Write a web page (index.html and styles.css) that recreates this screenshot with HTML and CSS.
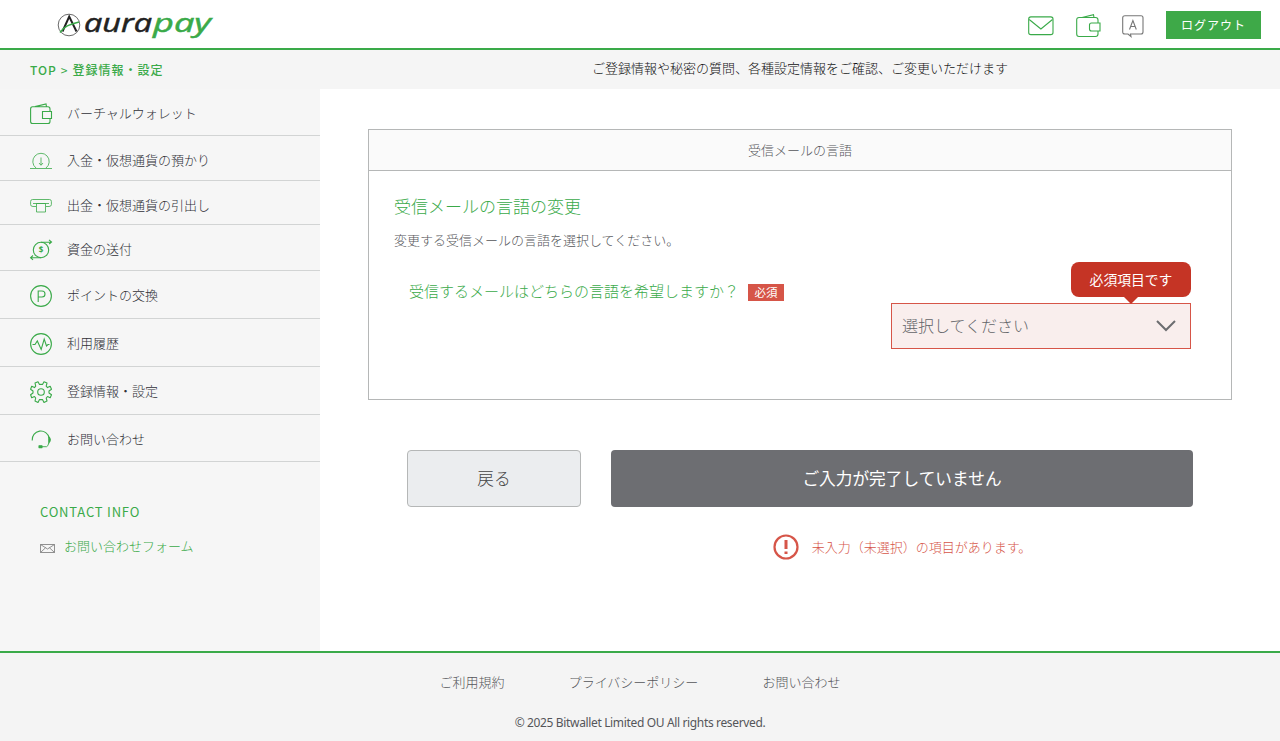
FILE: index.html
```
<!DOCTYPE html>
<html lang="ja">
<head>
<meta charset="utf-8">
<title>aurapay</title>
<link rel="stylesheet" href="styles.css">
</head>
<body>
<header class="header">
  <svg class="logo" width="160" height="42" viewBox="0 0 160 42">
    <circle cx="12" cy="21" r="10.800" fill="none" stroke="#444" stroke-width=".8"/>
    <path d="M5.500 27.500 12.200 12.500 19.500 27.500" fill="none" stroke="#222" stroke-width="2"/>
    <path d="M3 28.500C7 22 13 20.500 22 18" fill="none" stroke="#3aaa49" stroke-width="1.500"/>
    <text class="wordmark" x="27" y="28" textLength="68" lengthAdjust="spacingAndGlyphs" fill="#222" stroke="#222">aura</text>
    <text class="wordmark" x="96" y="28" textLength="58" lengthAdjust="spacingAndGlyphs" fill="#3aaa49" stroke="#3aaa49">pay</text>
  </svg>
  <div class="tools">
    <svg class="tool" width="26" height="20" viewBox="0 0 26 20"><rect x=".7" y=".9" width="24.300" height="17.700" rx="2.200"/><path d="M1.200 3.500 12.900 13 24.500 3.500"/></svg>
    <svg class="tool" width="25" height="24" viewBox="0 0 25 24"><path d="M22 9V6Q22 3.500 19.500 3.500H3Q.7 3.500.7 6V20Q.7 22.500 3 22.500H19.500Q22 22.500 22 20V17M6 3.500 17.500.7 18 3.500"/><path d="M24 9H15.500Q13.500 9 13.500 11V15Q13.500 17 15.500 17H24Z"/></svg>
    <svg class="tool gray" width="22" height="23" viewBox="0 0 22 23"><path d="M3 .7H19Q21 .7 21 2.700V17Q21 19 19 19H8.500L9 21.500 6 19H3Q.7 19 .7 17V2.700Q.7.7 3 .7Z"/><path d="M7.500 14.500 10.900 5.500 14.300 14.500M8.700 11.500H13.100"/></svg>
    <button class="logout">ログアウト</button>
  </div>
</header>
<div class="subhead">
  <div class="crumbs"><span>TOP</span><span class="sep">&gt;</span><b>登録情報・設定</b></div>
  <p class="lead">ご登録情報や秘密の質問、各種設定情報をご確認、ご変更いただけます</p>
</div>
<div class="body">
  <aside class="side">
    <ul class="nav">
      <li class="n1"><svg viewBox="0 0 22 22"><path d="M20 8.500V6Q20 3.800 18 3.800H2.500Q.6 3.800.6 6V18.500Q.6 20.500 2.500 20.500H18Q20 20.500 20 18.500V15.500M5 3.600 16 .9 16.500 3.600M12.500 8.500H21.500V15.500H12.500Z"/></svg>バーチャルウォレット</li>
      <li class="n2"><svg class="soft" viewBox="0 0 22 22"><path d="M0 18.500H22M6 18A8.200 8.200 0 1 1 16 18M11 7.500V15M9 13 11 15.300 13 13"/></svg>入金・仮想通貨の預かり</li>
      <li class="n3"><svg class="soft" viewBox="0 0 22 22"><path d="M6 11.500H3Q.6 11.500.6 9.500V6.500Q.6 4.500 2.500 4.500H19.500Q21.400 4.500 21.400 6.500V9.500Q21.400 11.500 19 11.500H16M3 8.500H19M6.500 8.500H15.500V17H6.500Z"/></svg>出金・仮想通貨の引出し</li>
      <li class="n4"><svg viewBox="0 0 22 22"><circle cx="11" cy="11" r="7.700"/><path d="M11 3.300 21.500 3M19 .9 21.500 3 19.200 5M11 18.700H.6M3 16.500.6 18.700 3 20.800"/><text class="dollar" x="8.700" y="14">$</text></svg>資金の送付</li>
      <li class="n5"><svg viewBox="0 0 22 22"><circle cx="11" cy="11" r="10.400"/><path d="M8.200 17V6H12Q15 6 15 9T12 12H8.200"/></svg>ポイントの交換</li>
      <li class="n6"><svg viewBox="0 0 22 22"><circle cx="11" cy="11" r="10.400"/><path d="M2.500 11.500H5L7.300 8 11.200 16.500 14.200 6 16.500 13 18 11.500H19.500"/></svg>利用履歴</li>
      <li class="n7"><svg viewBox="0 0 22 22"><circle cx="11" cy="11" r="3.300"/><path d="M9.500 3.500 11 3.300 12.500 3.500 14 .7 17 2 16.200 5.200 17.500 6.600 20.200 5.200 21.500 8.200 19 10 19 12 21.500 13.800 20.200 16.800 17.500 15.600 16.200 17 17 20 14 21.400 12.500 18.600H9.500L8 21.400 5 20 5.700 17 4.500 15.600 1.700 16.800.6 13.800 3 12V10L.6 8.200 1.700 5.200 4.500 6.600 5.700 5.200 5 2 8 .7Z" stroke-linejoin="round"/></svg>登録情報・設定</li>
      <li class="n8"><svg viewBox="0 0 22 22"><path d="M2.200 11.500A8.600 8.600 0 0 1 19.200 9"/><path d="M18.800 14Q18 17.500 16.500 17.700H11" stroke-width=".9"/><path d="M18.800 7.800Q21.800 10.500 18.800 14Z M9 16.800H12V18.600H9Z" fill="#3aaa49" stroke-linejoin="round"/></svg>お問い合わせ</li>
    </ul>
    <h2 class="contact-title">CONTACT INFO</h2>
    <div class="contact"><svg width="15" height="9" viewBox="0 0 15 9"><path d="M.5.500H14.500V8.500H.5ZM.5.500 7.500 5 14.500.5M.5 8.500 5.500 3.800M14.500 8.500 9.500 3.800"/></svg>お問い合わせフォーム</div>
  </aside>
  <main class="main">
    <section class="panel">
      <h1 class="panel-head">受信メールの言語</h1>
      <div class="panel-body">
        <h2 class="title">受信メールの言語の変更</h2>
        <p class="desc">変更する受信メールの言語を選択してください。</p>
        <div class="question"><span>受信するメールはどちらの言語を希望しますか？</span><em class="badge">必須</em></div>
        <div class="select"><span>選択してください</span>
          <svg width="20" height="12" viewBox="0 0 20 12"><path d="M1 1 10 10 19 1"/></svg>
          <div class="tip">必須項目です</div>
        </div>
      </div>
    </section>
    <div class="actions">
      <button class="btn back">戻る</button>
      <button class="btn submit">ご入力が完了していません</button>
    </div>
    <div class="warning"><svg width="26" height="26" viewBox="0 0 26 26"><circle cx="13" cy="13" r="11.500"/><path d="M13 6V15M13 17.500V20" stroke-width="3"/></svg><span>未入力（未選択）の項目があります。</span></div>
  </main>
</div>
<footer class="footer">
  <nav class="links"><span>ご利用規約</span><span>プライバシーポリシー</span><span>お問い合わせ</span></nav>
  <p class="copy">© 2025 Bitwallet Limited OU All rights reserved.</p>
</footer>
</body>
</html>
```
FILE: styles.css
```
* { box-sizing: border-box; margin: 0; padding: 0; }
body { width: 1280px; height: 741px; overflow: hidden; background: #fff; color: #303138; font: 300 13px/20px "Noto Sans CJK JP", sans-serif; white-space: nowrap; }
svg { fill: none; flex: none; }
button { font-family: inherit; }
.header { height: 50px; border-bottom: 2px solid #3aaa49; display: flex; justify-content: space-between; padding: 0 19px 0 57px; }
.logo { margin-top: 4px; overflow: visible; }
.wordmark { font: italic 400 26px "Open Sans", sans-serif; stroke-width: .5; }
.tools { display: flex; height: 50px; align-items: center; gap: 22px; }
.tool { stroke: #3aaa49; stroke-width: 1.1; margin: 2px -1px 0 1px; }
.tool.gray { stroke: #777; margin: 2px 0 0; }
.logout { width: 95px; height: 28px; border: 0; background: #3ea948; color: #fff; font-size: 12px; letter-spacing: 1px; font-weight: 400; line-height: 26px; }
.subhead { height: 39px; background: #f5f5f5; display: flex; }
.crumbs { width: 320px; padding: 10px 0 0 30px; color: #3aaa49; display: flex; }
.crumbs span { font-size: 12px; font-weight: 500; letter-spacing: 1px; }
.crumbs .sep { margin: 0 4px; font-weight: 400; }
.crumbs b { font-size: 12px; font-weight: 500; letter-spacing: 1px; }
.lead { flex: 1; text-align: center; padding-top: 8px; color: #111; }
.body { display: flex; height: 562px; }
.side { width: 320px; background: #f6f6f6; }
.nav { list-style: none; }
.nav li { display: flex; align-items: center; gap: 15px; padding-left: 30px; height: 48px; border-bottom: 1px solid #d2d4d4; }
.nav svg { width: 22px; height: 22px; margin-top: 2px; overflow: visible; stroke: #3aaa49; stroke-width: 1.1; }
.nav svg.soft { stroke-width: .8; }
.dollar { font: 700 8px "Noto Sans", sans-serif; fill: #3aaa49; stroke: none; }
.nav .n1 { height: 47px; padding-top: 2px; }
.nav .n2 { height: 45px; padding-top: 4px; }
.nav .n3 { height: 44px; padding-top: 4px; }
.nav .n4 { height: 46px; padding-top: 3px; }
.nav .n5, .nav .n6, .nav .n7 { padding-top: 1px; }
.nav .n8 { height: 47px; padding-top: 2px; }
.contact-title { color: #3aaa49; font-size: 13px; font-weight: 400; letter-spacing: .8px; margin: 40px 0 0 40px; }
.contact { display: flex; align-items: center; gap: 9px; color: #3aaa49; margin: 14px 0 0 40px; }
.contact svg { stroke: #777; stroke-width: .8; margin-top: 4px; }
.main { flex: 1; padding: 40px 48px 0; }
.panel { height: 271px; border: 1px solid #b5b7b7; }
.panel-head { height: 41px; background: #fafafa; border-bottom: 1px solid #b5b7b7; text-align: center; font-size: 13px; font-weight: 300; line-height: 39px; color: #55565a; }
.panel-body { padding: 25px 40px 0 25px; }
.title { color: #3aaa49; font-size: 17px; font-weight: 300; line-height: 20px; }
.desc { color: #55565a; margin-top: 14px; }
.question { display: flex; align-items: center; color: #3aaa49; font-size: 15px; margin: 31px 0 0 15px; }
.badge { width: 36px; height: 17px; background: #d65548; color: #fff; font-style: normal; font-weight: 400; font-size: 11.500px; line-height: 17px; text-align: center; margin: 2px 0 0 9px; }
.select { position: relative; width: 300px; height: 46px; margin: 2px 0 0 auto; padding: 0 14px 0 10px; border: 1px solid #d65548; background: #f9eeed; color: #626468; font-size: 16px; display: flex; align-items: center; justify-content: space-between; }
.select span { padding-bottom: 2px; }
.select svg { stroke: #6c6d70; stroke-width: 2; }
.tip { position: absolute; right: -1px; top: -42px; width: 120px; height: 35px; border-radius: 8px; background: #c53425; color: #fff; text-align: center; font-size: 13.800px; font-weight: 400; line-height: 34px; }
.tip::after { content: ""; position: absolute; left: 53px; top: 35px; border: 7px solid transparent; border-top-color: #c53425; border-bottom: 0; }
.actions { display: flex; gap: 30px; margin: 50px 39px 0; }
.btn { height: 57px; border-radius: 4px; font-size: 16.700px; font-weight: 300; padding-bottom: 2px; }
.back { width: 174px; border: 1px solid #b5b7b7; background: #ebedef; color: #444; }
.submit { flex: 1; border: 0; background: #6d6e72; color: #fff; font-weight: 400; }
.warning { display: flex; align-items: center; justify-content: center; gap: 13px; margin: 27px 0 0 204px; color: #d65548; }
.warning svg { stroke: #d65548; stroke-width: 2.200; }
.warning span { padding-bottom: 1px; }
.footer { height: 90px; border-top: 2px solid #3aaa49; background: #f4f4f4; color: #55565a; }
.links { display: flex; justify-content: center; gap: 64px; padding-top: 19px; }
.copy { text-align: center; margin-top: 21px; font: 400 12px/20px "Noto Sans", sans-serif; letter-spacing: -.35px; }
```
